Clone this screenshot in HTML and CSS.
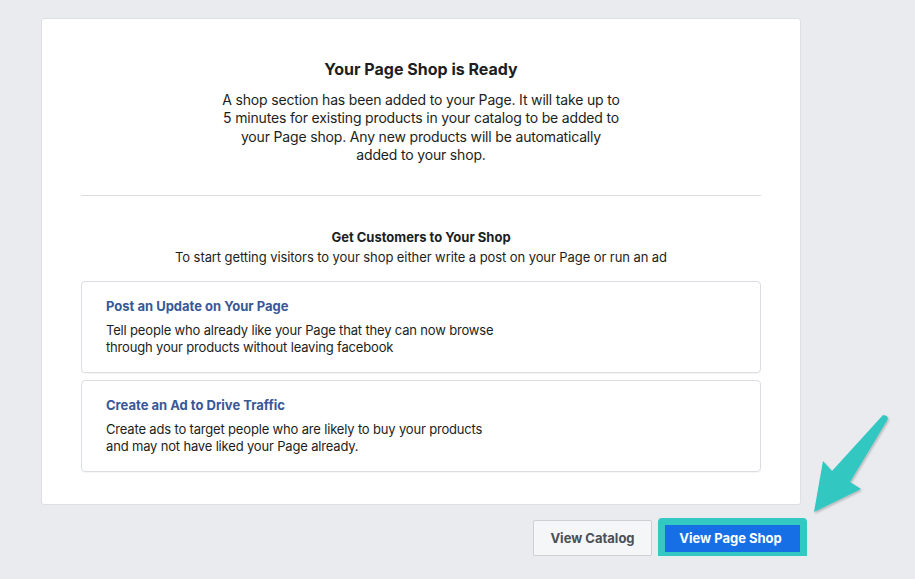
FILE: index.html
```html
<!DOCTYPE html>
<html lang="en">
<head>
  <meta charset="UTF-8">
  <title>Your Page Shop is Ready</title>
  <link rel="stylesheet" href="styles.css">
</head>
<body>
  <div class="page">
    <div class="card">
      <h2>Your Page Shop is Ready</h2>
      <p class="intro">A shop section has been added to your Page. It will take up to 5 minutes for existing products in your catalog to be added to your Page shop. Any new products will be automatically added to your shop.</p>

      <hr class="divider">

      <h3>Get Customers to Your Shop</h3>
      <p class="sub">To start getting visitors to your shop either write a post on your Page or run an ad</p>

      <div class="options">
        <div class="option">
          <a class="option-title" href="#">Post an Update on Your Page</a>
          <p>Tell people who already like your Page that they can now browse<br>through your products without leaving facebook</p>
        </div>
        <div class="option">
          <a class="option-title" href="#">Create an Ad to Drive Traffic</a>
          <p>Create ads to target people who are likely to buy your products<br>and may not have liked your Page already.</p>
        </div>
      </div>
    </div>

    <div class="actions">
      <button class="btn btn-gray">View Catalog</button>
      <div class="highlight-wrap">
        <button class="btn btn-blue">View Page Shop</button>
        <span class="highlight"></span>
      </div>
    </div>
  </div>

  <svg class="arrow" width="90" height="115" viewBox="0 0 90 115">
    <defs>
      <filter id="shadow" x="-20%" y="-20%" width="140%" height="140%">
        <feDropShadow dx="1" dy="1.5" stdDeviation="1.2" flood-color="#000" flood-opacity="0.25"/>
      </filter>
    </defs>
    <polygon filter="url(#shadow)" fill="#32c7c0"
      points="73,5 77,6 78,9 40,72 51,79 4,102 13,51 22,61"/>
  </svg>
</body>
</html>
```

FILE: styles.css
```css
body {
  margin: 0;
  background-color: #e9ebee;
  font-family: 'Inter', 'Liberation Sans', sans-serif;
  color: #1c1e21;
}

.page {
  width: 760px;
  margin-left: 41px;
  padding-top: 18px;
}

.card {
  background: #fff;
  border: 1px solid #dddfe2;
  border-radius: 3px;
  padding: 40px 39px 32px;
  text-align: center;
}

h2 {
  margin: 0;
  font-size: 16px;
  line-height: 20px;
  font-weight: 700;
}

.intro {
  width: 402px;
  margin: 12px auto 0;
  font-size: 14px;
  line-height: 18.3px;
  letter-spacing: -0.17px;
}

.divider {
  border: 0;
  border-top: 1px solid #dadde1;
  margin: 31px 0 32px;
}

h3 {
  margin: 0;
  font-size: 13px;
  line-height: 18px;
  font-weight: 700;
}

.sub {
  margin: 2px 0 0;
  font-size: 13px;
  line-height: 18px;
  letter-spacing: -0.08px;
}

.options {
  display: flex;
  flex-direction: column;
  gap: 7px;
  margin-top: 15px;
  text-align: left;
}

.option {
  border: 1px solid #dadde1;
  border-radius: 4px;
  padding: 16px 24px 16px;
  box-shadow: 0 1px 1px rgba(0, 0, 0, 0.04);
}

.option-title {
  display: block;
  color: #385898;
  font-size: 13px;
  line-height: 16px;
  font-weight: 700;
  text-decoration: none;
}

.option p {
  margin: 8px 0 0;
  font-size: 13px;
  line-height: 17px;
  letter-spacing: -0.17px;
}

.actions {
  display: flex;
  justify-content: flex-end;
  gap: 8px;
  margin-top: 15px;
}

.btn {
  height: 36px;
  border-radius: 2px;
  font-family: inherit;
  font-size: 13px;
  font-weight: 700;
  cursor: pointer;
}

.btn-gray {
  width: 119px;
  background: #f5f6f7;
  border: 1px solid #ccd0d5;
  color: #4b4f56;
}

.btn-blue {
  width: 141px;
  background: #166fe5;
  border: 1px solid #166fe5;
  color: #fff;
}

.highlight-wrap {
  position: relative;
}

.highlight {
  position: absolute;
  top: -2px;
  left: -2px;
  right: -6px;
  bottom: -3px;
  border: 7px solid #33c8c1;
  border-radius: 4px;
  pointer-events: none;
}

.arrow {
  position: absolute;
  left: 810px;
  top: 410px;
}
```
